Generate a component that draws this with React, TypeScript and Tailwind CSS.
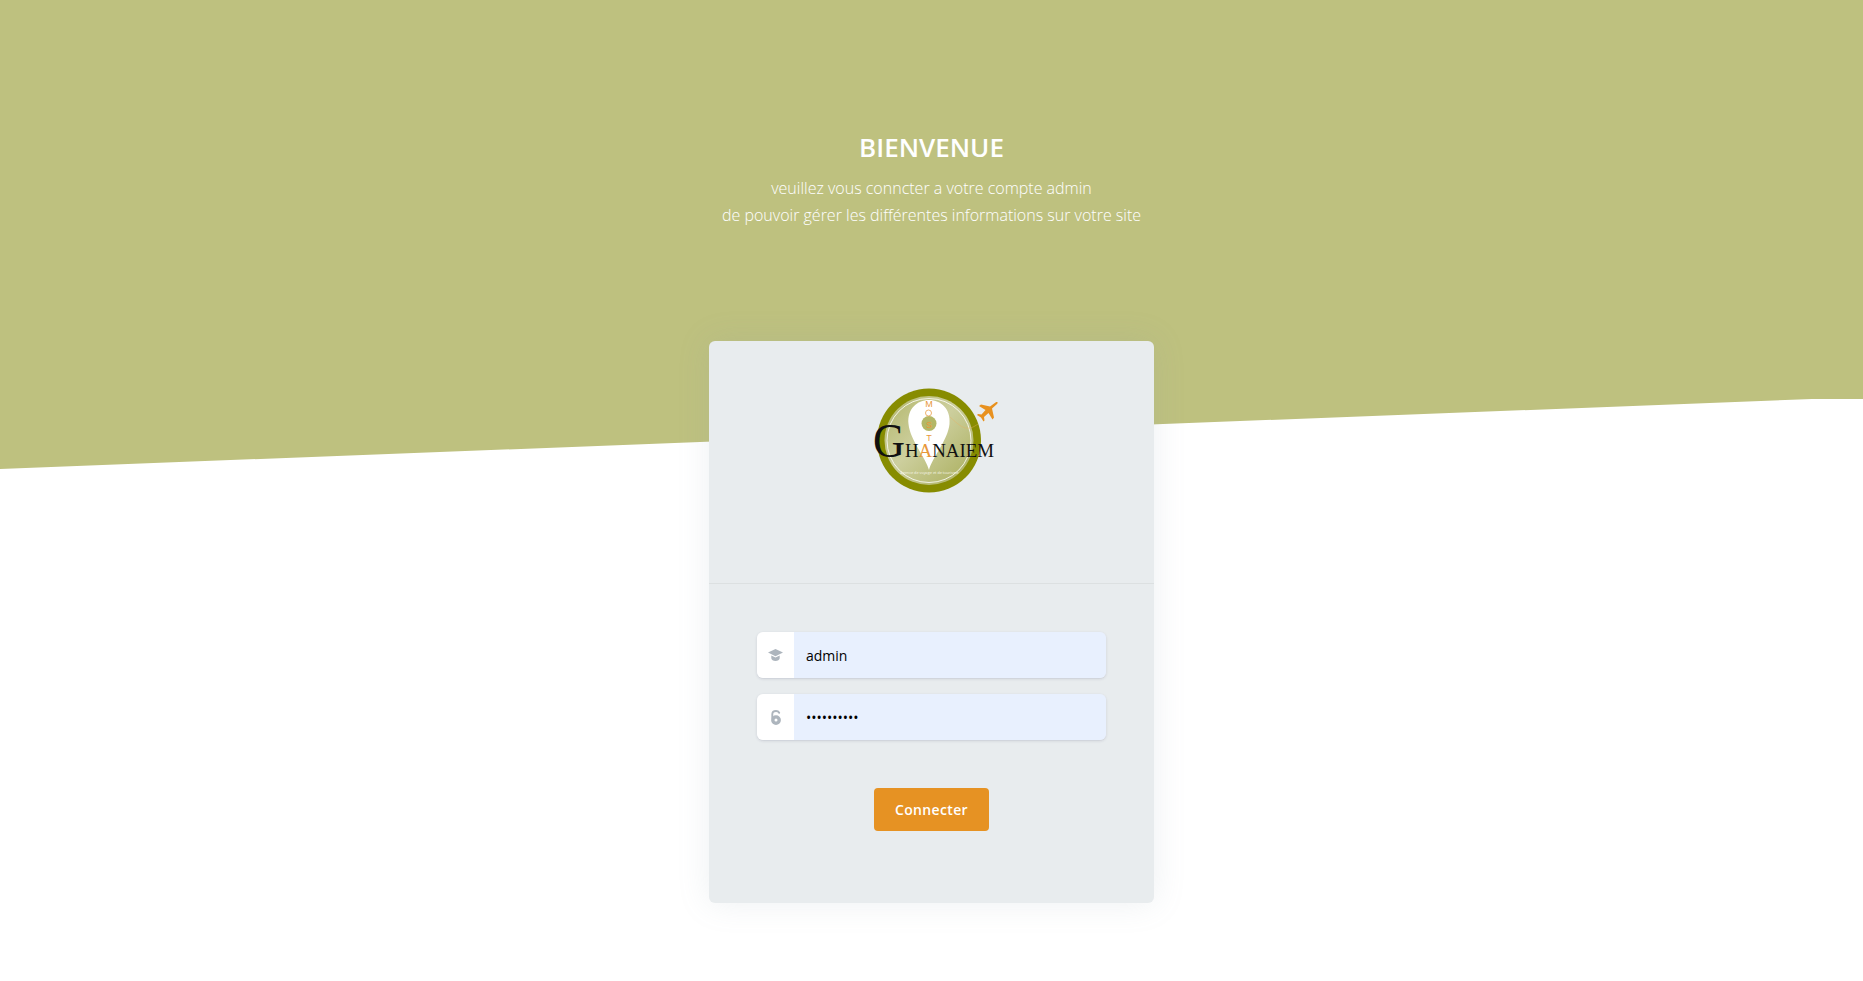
// App.tsx
const Logo = () => (
    <svg width="180" height="140" viewBox="0 0 180 140">
        <defs>
            <linearGradient id="disc" x1="0" y1="0" x2="1" y2="1">
                <stop offset="0" stopColor="#b2b66a" />
                <stop offset="0.45" stopColor="#cdcf9e" />
                <stop offset="1" stopColor="#a8ad5a" />
            </linearGradient>
        </defs>
        <circle cx="89" cy="70.5" r="52" fill="#878c00" />
        <circle cx="89" cy="70.5" r="44.500" fill="url(#disc)" />
        <circle cx="89" cy="70.5" r="42" fill="none" stroke="#ffffff" strokeWidth="0.8" />
        <path d="M89 100 C86 88 70 70 68.500 54 C67 39 77 30 89 30 C101 30 111 39 109.500 54 C108 70 92 88 89 100 Z" fill="#ffffff" />
        <circle cx="89" cy="53.500" r="7.500" fill="#b3b766" />
        <circle cx="88.500" cy="43" r="3" fill="none" stroke="#e8a04a" strokeWidth="0.8" />
        <path d="M110 47 C122 58 127 62 138 54" fill="none" stroke="#e8b060" strokeWidth="0.4" />
        <g fontFamily="'Liberation Sans', sans-serif" fontSize="9" fill="#e8973a" textAnchor="middle">
            <text x="89" y="36.500">M</text>
            <text x="89" y="58">S</text>
            <text x="89" y="71">T</text>
        </g>
        <path
            d="M157 34 C158.500 32.500 157.500 31.500 155.500 32.500 L150 36.500 L141 34.500 L139 36 L145.500 40 L141.500 44.500 L138 44 L137 45 L141 47.500 L143.500 51.500 L144.500 50.500 L144 47 L148.500 43 L152.500 49.500 L154 47.500 L152 38.500 Z"
            fill="#e8911f"
        />
        <g fontFamily="'Liberation Serif', serif" fill="#111111">
            <text x="33" y="86.500" fontSize="49" textLength="32" lengthAdjust="spacingAndGlyphs">G</text>
            <text x="65" y="87" fontSize="19.500" textLength="89" lengthAdjust="spacingAndGlyphs">H<tspan fill="#e8973a">A</tspan>NAIEM</text>
        </g>
        <text x="89.500" y="104" fontSize="3.800" fill="#f4f4e4" textAnchor="middle" fontFamily="'Open Sans', sans-serif">
            Agence de voyage et de tourisme
        </text>
    </svg>
)

const GradCap = () => (
    <svg width="15" height="12" viewBox="0 0 15 12" fill="#adb5bd">
        <path d="M7.500 0 L15 3.600 L7.500 7.200 L0 3.600 Z" />
        <path d="M3.300 6.500 V9.200 C3.300 10.800 5.400 12 7.500 12 C9.600 12 11.700 10.800 11.700 9.200 V6.500 L7.500 8.500 Z" />
    </svg>
)

const LockOpen = () => (
    <svg width="10" height="15" viewBox="0 0 10 15" fill="none">
        <path d="M1.300 8 V4.300 C1.300 2.300 2.900 1 5 1 C6.400 1 7.600 1.700 8.200 2.800" stroke="#adb5bd" strokeWidth="1.900" strokeLinecap="round" />
        <path fillRule="evenodd" clipRule="evenodd" d="M5 5.200 A4.900 4.900 0 1 1 5 15 A4.900 4.900 0 1 1 5 5.200 Z M5 8.600 A1.500 1.500 0 1 0 5 11.600 A1.500 1.500 0 1 0 5 8.600 Z" fill="#adb5bd" />
    </svg>
)

const Field = ({ icon, type, value }: { icon: React.ReactNode; type: string; value: string }) => (
    <div className="flex h-[46px] overflow-hidden rounded-[6px] shadow-[0_1px_3px_rgba(50,50,93,0.15),0_1px_0_rgba(0,0,0,0.02)]">
        <div className="flex w-[37px] shrink-0 items-center justify-center bg-white">{icon}</div>
        <input
            type={type}
            defaultValue={value}
            readOnly
            className="min-w-0 flex-1 bg-[#e8f0fe] pt-[2px] pr-3 pl-[12px] text-sm text-black outline-none"
        />
    </div>
)

export default function App() {
    return (
        <div className="min-h-[981px] bg-white font-['Open_Sans',sans-serif]">
            {/* Header */}
            <div className="h-[469px] bg-[#bec17f] pt-[128px] text-center text-white [clip-path:polygon(0_0,100%_0,100%_399px,1812px_399px,0_469px)]">
                <h1 className="text-[26px] leading-[39px] font-semibold">BIENVENUE</h1>
                <p className="mt-[8px] text-base leading-[27px] font-light">
                    veuillez vous conncter a votre compte admin
                    <br />
                    de pouvoir gérer les différentes informations sur votre site
                </p>
            </div>

            {/* Login card */}
            <div className="relative mx-auto -mt-[128px] w-[445px] overflow-hidden rounded-[6px] bg-[#e8ecee] shadow-[0_0_32px_0_rgba(136,152,170,0.15)]">
                <div className="flex h-[243px] items-start justify-center border-b border-black/5 pt-[29px] pr-[3px]">
                    <Logo />
                </div>
                <div className="px-[48px] pt-[48px] pb-[72px]">
                    <div className="space-y-4">
                        <Field icon={<GradCap />} type="text" value="admin" />
                        <Field icon={<LockOpen />} type="password" value="••••••••••" />
                    </div>
                    <div className="mt-[48px] flex justify-center">
                        <button className="h-[43px] w-[115px] rounded-[4px] bg-[#e69223] text-sm font-semibold tracking-[0.35px] text-white">
                            Connecter
                        </button>
                    </div>
                </div>
            </div>
        </div>
    )
}
